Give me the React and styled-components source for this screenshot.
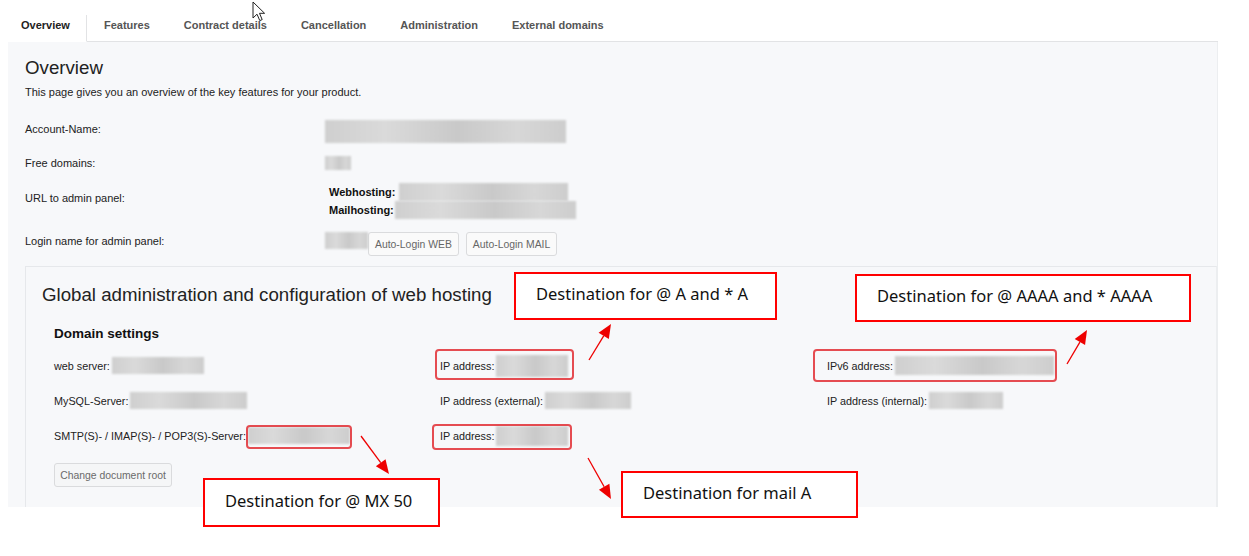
import styled, { createGlobalStyle } from 'styled-components';

const GlobalStyle = createGlobalStyle`
  html, body {
    margin: 0;
    padding: 0;
    background: #fff;
  }

  body {
    font-family: "Liberation Sans", Arial, sans-serif;
    color: #222;
  }
`;

const Page = styled.div`
  position: relative;
  width: 1249px;
  height: 556px;
  padding: 8px 8px 0;
  box-sizing: border-box;
  overflow: hidden;
`;

const TabBar = styled.nav`
  display: flex;
  align-items: flex-end;
  width: 1210px;
  height: 34px;
`;

const Tab = styled.div`
  height: 26px;
  padding: ${(p) => (p.$active ? '0 16px 0 13px' : '0 17px')};
  line-height: 20px;
  font-size: 11px;
  font-weight: bold;
  color: ${(p) => (p.$active ? '#222' : '#555')};
  background: #fff;
  border-bottom: 1px solid ${(p) => (p.$active ? '#fff' : '#e2e3e5')};
  border-right: ${(p) => (p.$active ? '1px solid #e2e3e5' : 'none')};
  white-space: nowrap;
`;

const TabFiller = styled.div`
  flex: 1;
  height: 26px;
  border-bottom: 1px solid #e2e3e5;
`;

const Panel = styled.main`
  width: 1210px;
  height: 465px;
  box-sizing: border-box;
  padding: 15px 0 0 17px;
  background: #f7f8fa;
  border-right: 1px solid #eceef0;
  overflow: hidden;
`;

const Title = styled.h1`
  margin: 0;
  font-size: 18.7px;
  line-height: 22px;
  font-weight: normal;
  color: #222;
`;

const Lead = styled.p`
  margin: 6px 0 0;
  font-size: 11px;
  line-height: 14px;
`;

const InfoList = styled.div`
  display: flex;
  flex-direction: column;
  gap: 13px;
  margin-top: 21px;
`;

const InfoRow = styled.div`
  display: grid;
  grid-template-columns: 300px 1fr;
  align-items: center;
`;

const Label = styled.span`
  font-size: 11px;
  line-height: 14px;
  padding-bottom: ${(p) => p.$lift || 0}px;
  white-space: nowrap;
`;

const Blur = styled.span`
  display: inline-block;
  flex: none;
  width: ${(p) => p.$w}px;
  height: ${(p) => p.$h || 17}px;
  background: linear-gradient(90deg, #cfcfcf 0%, #dadada 25%, #c9c9c9 55%, #d7d7d7 80%, #cdcdcd 100%);
  filter: blur(1.2px);
`;

const Value = styled.div`
  display: flex;
  align-items: ${(p) => p.$align || 'center'};
  gap: ${(p) => p.$gap || 0}px;
`;

const HostLines = styled.div`
  display: flex;
  flex-direction: column;
  padding-left: 4px;
`;

const HostLine = styled.div`
  display: flex;
  align-items: center;
  height: 18px;
  gap: ${(p) => p.$gap}px;

  b {
    font-size: 11px;
    color: #111;
  }
`;

const Button = styled.button`
  height: 24px;
  padding: 0 6px;
  margin-left: ${(p) => p.$space || 0}px;
  font-family: "Liberation Sans", Arial, sans-serif;
  font-size: 10.4px;
  color: #666;
  background: #fafafa;
  border: 1px solid #dadbdd;
  border-radius: 3px;
  white-space: nowrap;
`;

const Section = styled.section`
  margin-top: 10px;
  padding: 17px 0 0 16px;
  height: 300px;
  border: 1px solid #e6e8eb;
  border-right-color: #eceef0;
  background: #f7f8fa;
`;

const SubSection = styled.div`
  padding-left: 12px;
`;

const SubTitle = styled.h2`
  margin: 19px 0 0;
  font-size: 13.5px;
  line-height: 18px;
  font-weight: bold;
  color: #111;
`;

const DomainGrid = styled.div`
  display: grid;
  grid-template-columns: 386px 387px 1fr;
  grid-auto-rows: 35px;
  align-items: center;
  margin-top: 5px;
`;

const Cell = styled.div`
  position: relative;
  justify-self: start;
  display: flex;
  align-items: center;
  gap: 2px;
  font-size: 10.8px;
  line-height: 14px;
  white-space: nowrap;

  ${(p) => p.$mark && `
    &::after {
      content: '';
      position: absolute;
      inset: ${p.$mark};
      border: 2px solid rgba(226, 56, 62, 0.9);
      border-radius: 4px;
      pointer-events: none;
    }
  `}
`;

const RootButton = styled(Button)`
  margin-top: 10px;
  width: 118px;
  padding: 0;
  background: #f5f6f7;
  color: #6a6a6a;
`;

const Callout = styled.div`
  position: absolute;
  left: ${(p) => p.$x}px;
  top: ${(p) => p.$y}px;
  width: ${(p) => p.$w}px;
  height: ${(p) => p.$h}px;
  box-sizing: border-box;
  display: flex;
  align-items: center;
  padding: 0 0 5px 20px;
  border: 2px solid #ff0000;
  background: #fff;
  font-family: "Noto Sans", "Open Sans", sans-serif;
  font-size: 16.5px;
  color: #111;
  white-space: nowrap;
`;

const Overlay = styled.svg`
  position: absolute;
  left: 0;
  top: 0;
  pointer-events: none;
`;

const Cursor = styled.svg`
  position: absolute;
  left: 252px;
  top: 1px;
`;

const tabs = ['Overview', 'Features', 'Contract details', 'Cancellation', 'Administration', 'External domains'];

const arrows = [
  [589, 360, 611, 324],
  [1067, 364, 1087, 330],
  [361, 436, 389, 474],
  [588, 458, 611, 499],
];

function Arrow({ from }) {
  const [x1, y1, x2, y2] = from;
  const dx = x2 - x1;
  const dy = y2 - y1;
  const len = Math.hypot(dx, dy);
  const ux = dx / len;
  const uy = dy / len;
  const bx = x2 - ux * 14;
  const by = y2 - uy * 14;
  const pts = [
    [x2, y2],
    [bx - uy * 6, by + ux * 6],
    [bx + uy * 6, by - ux * 6],
  ].map((p) => p.join(',')).join(' ');
  return (
    <g>
      <line x1={x1} y1={y1} x2={bx} y2={by} stroke="#ee0000" strokeWidth="1.3" />
      <polygon points={pts} fill="#ee0000" />
    </g>
  );
}

export default function App() {
  return (
    <Page>
      <GlobalStyle />
      <TabBar>
        {tabs.map((t, i) => (
          <Tab key={t} $active={i === 0}>{t}</Tab>
        ))}
        <TabFiller />
      </TabBar>

      <Panel>
        <Title>Overview</Title>
        <Lead>This page gives you an overview of the key features for your product.</Lead>

        <InfoList>
          <InfoRow>
            <Label $lift={6}>Account-Name:</Label>
            <Value><Blur $w={241} $h={23} /></Value>
          </InfoRow>
          <InfoRow>
            <Label>Free domains:</Label>
            <Value><Blur $w={26} $h={14} /></Value>
          </InfoRow>
          <InfoRow>
            <Label $lift={7}>URL to admin panel:</Label>
            <HostLines>
              <HostLine $gap={4}>
                <b>Webhosting:</b>
                <Blur $w={169} $h={18} />
              </HostLine>
              <HostLine $gap={1}>
                <b>Mailhosting:</b>
                <Blur $w={181} $h={18} />
              </HostLine>
            </HostLines>
          </InfoRow>
          <InfoRow>
            <Label $lift={6}>Login name for admin panel:</Label>
            <Value $align="flex-start">
              <Blur $w={43} $h={17} />
              <Button>Auto-Login WEB</Button>
              <Button $space={7}>Auto-Login MAIL</Button>
            </Value>
          </InfoRow>
        </InfoList>

        <Section>
          <Title>Global administration and configuration of web hosting</Title>
          <SubSection>
            <SubTitle>Domain settings</SubTitle>
            <DomainGrid>
              <Cell>web server:<Blur $w={92} /></Cell>
              <Cell $mark="-6px -6px -3px -5px">IP address: <Blur $w={72} $h={22} /></Cell>
              <Cell $mark="-7px -3px -7px -14px">IPv6 address: <Blur $w={159} $h={19} /></Cell>

              <Cell>MySQL-Server: <Blur $w={117} /></Cell>
              <Cell>IP address (external):<Blur $w={86} /></Cell>
              <Cell>IP address (internal):<Blur $w={74} /></Cell>

              <Cell $mark="-2px -2px -5px 192px">SMTP(S)- / IMAP(S)- / POP3(S)-Server:<Blur $w={102} /></Cell>
              <Cell $mark="-2px -4px -4px -8px">IP address: <Blur $w={72} $h={20} /></Cell>
              <div />
            </DomainGrid>
            <RootButton>Change document root</RootButton>
          </SubSection>
        </Section>
      </Panel>

      <Callout $x={514} $y={272} $w={263} $h={48}>Destination for @ A and * A</Callout>
      <Callout $x={855} $y={274} $w={336} $h={48}>Destination for @ AAAA and * AAAA</Callout>
      <Callout $x={203} $y={478} $w={237} $h={49}>Destination for @ MX 50</Callout>
      <Callout $x={621} $y={471} $w={237} $h={47}>Destination for mail A</Callout>

      <Overlay width="1249" height="556" viewBox="0 0 1249 556">
        {arrows.map((a, i) => <Arrow key={i} from={a} />)}
      </Overlay>

      <Cursor width="14" height="21" viewBox="0 0 14 21">
        <path d="M1 1 L1 17 L5 13.2 L7.8 19.6 L10.2 18.6 L7.5 12.3 L12.6 12.3 Z" fill="#fff" stroke="#222" strokeWidth="1" strokeLinejoin="round" />
      </Cursor>
    </Page>
  );
}
